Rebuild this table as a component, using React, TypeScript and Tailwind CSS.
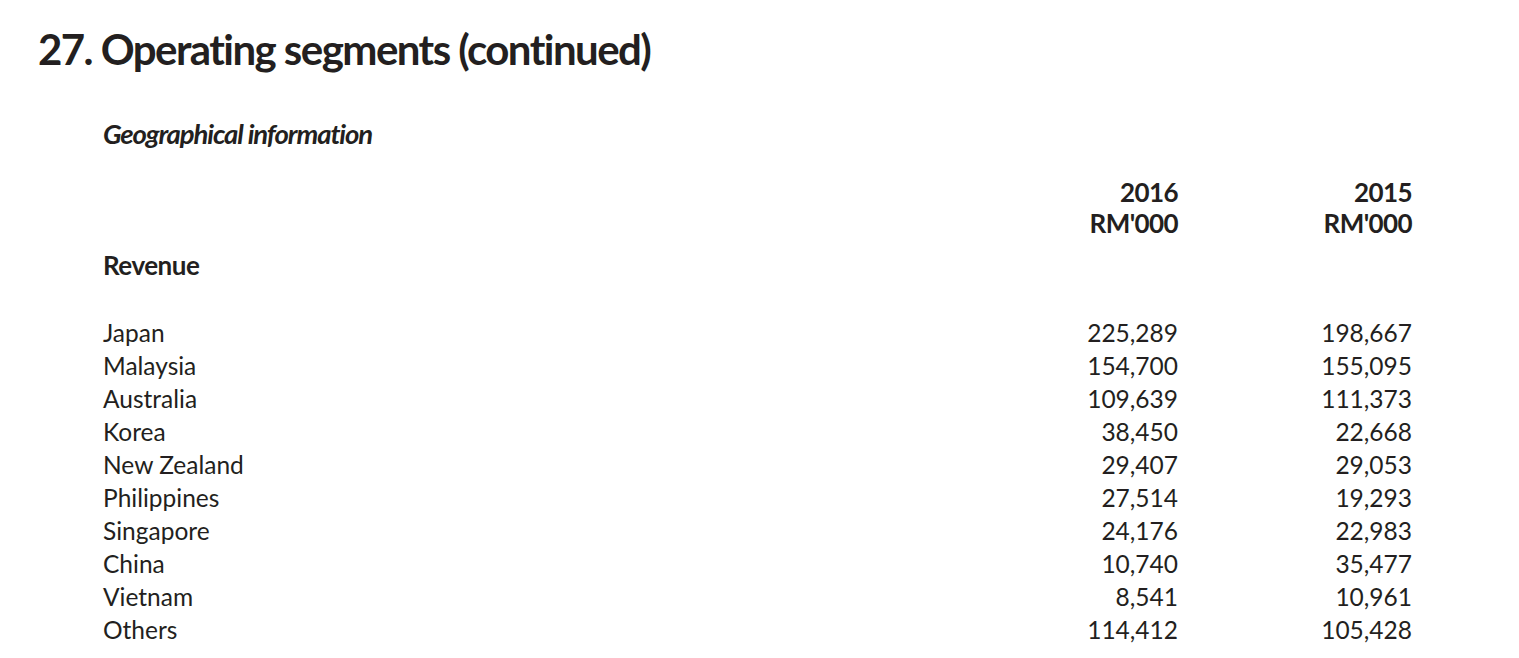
const rows: [string, string, string][] = [
  ["Japan", "225,289", "198,667"],
  ["Malaysia", "154,700", "155,095"],
  ["Australia", "109,639", "111,373"],
  ["Korea", "38,450", "22,668"],
  ["New Zealand", "29,407", "29,053"],
  ["Philippines", "27,514", "19,293"],
  ["Singapore", "24,176", "22,983"],
  ["China", "10,740", "35,477"],
  ["Vietnam", "8,541", "10,961"],
  ["Others", "114,412", "105,428"],
];

export default function App() {
  return (
    <div className="min-h-screen w-full bg-white text-[#231f20] font-['Lato',sans-serif]">
      <h1 className="pl-[38px] pt-[25px] text-[42px] font-bold leading-[48px] tracking-[-1.55px]">
        27. Operating segments (continued)
      </h1>

      <div className="pl-[103px] w-[1412px]">
        <h2 className="mt-[46px] text-[27.5px] font-bold italic leading-[30px] tracking-[-1.1px]">
          Geographical information
        </h2>

        <div className="mt-[28px] grid grid-cols-[1fr_200px_234px] text-[26px] font-bold leading-[31px] tracking-[-0.6px]">
          <div />
          <div className="text-right">
            2016
            <br />
            RM'000
          </div>
          <div className="text-right">
            2015
            <br />
            RM'000
          </div>
        </div>

        <h3 className="mt-[10px] text-[26px] font-bold leading-[33px] tracking-[-0.5px]">Revenue</h3>

        <div className="mt-[34px] grid grid-cols-[1fr_200px_234px] text-[24.5px] leading-[33px]">
          {rows.map(([name, a, b]) => (
            <div key={name} className="contents">
              <div>{name}</div>
              <div className="text-right">{a}</div>
              <div className="text-right">{b}</div>
            </div>
          ))}
        </div>
      </div>
    </div>
  );
}
